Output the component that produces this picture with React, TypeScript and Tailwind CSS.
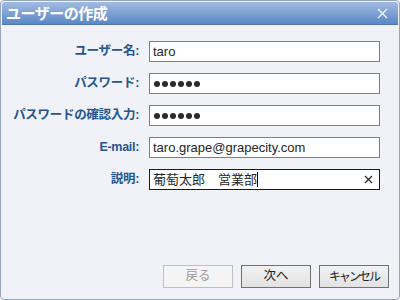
import React from "react";

const fontStack = {
  fontFamily: '"Liberation Sans", "Noto Sans CJK JP", sans-serif',
};

// Form row definition
type Field = {
  label: string;
  value: string;
  password?: boolean;
  focused?: boolean;
};

const fields: Field[] = [
  { label: "ユーザー名:", value: "taro" },
  { label: "パスワード:", value: "", password: true },
  { label: "パスワードの確認入力:", value: "", password: true },
  { label: "E-mail:", value: "taro.grape@grapecity.com" },
  { label: "説明:", value: "葡萄太郎　営業部", focused: true },
];

const Dots = () => (
  <div className="flex gap-[2px] pl-[1px]">
    {[0, 1, 2, 3, 4, 5].map((i) => (
      <span key={i} className="w-[6px] h-[6px] rounded-full bg-[#2a2a2a]" />
    ))}
  </div>
);

const App: React.FC = () => {
  return (
    <div
      className="w-[400px] h-[300px] bg-[#f0f2f7] border border-[#96a6be] rounded-[4px] flex flex-col overflow-hidden"
      style={fontStack}
    >
      {/* title bar */}
      <div className="mx-px mt-px h-[23px] rounded-t-[3px] bg-gradient-to-b from-[#a3bbe0] to-[#5b86c7] border-b border-[#4f78b5] flex items-center justify-between pl-[4px] pr-[10px]">
        <span className="text-white font-bold text-[15px] leading-none tracking-[-0.5px]">
          ユーザーの作成
        </span>
        <svg width="11" height="11" viewBox="0 0 11 11" className="text-[#eef3fb]">
          <path d="M1 1 L10 10 M10 1 L1 10" stroke="currentColor" strokeWidth="1.4" />
        </svg>
      </div>

      {/* form */}
      <div className="flex-1 flex flex-col gap-[11px] pt-[16px]">
        {fields.map((f) => (
          <div key={f.label} className="flex items-center h-[21px]">
            <div className="w-[138px] text-right text-[12.5px] font-bold text-[#24558c] tracking-[-0.3px]">
              {f.label}
            </div>
            <div
              className={
                "ml-[10px] w-[231px] h-[21px] bg-white flex items-center pl-[3px] pr-[6px] " +
                (f.focused ? "border border-[#1a1a1a]" : "border border-[#7f7f7f]")
              }
            >
              {f.password ? (
                <Dots />
              ) : (
                <span className="text-[13px] text-[#262626] leading-none">{f.value}</span>
              )}
              {f.focused && (
                <>
                  <span className="w-px h-[15px] bg-black" />
                  <span className="flex-1" />
                  <svg width="9" height="9" viewBox="0 0 9 9">
                    <path d="M1 1 L8 8 M8 1 L1 8" stroke="#333" strokeWidth="1.4" />
                  </svg>
                </>
              )}
            </div>
          </div>
        ))}
      </div>

      {/* buttons */}
      <div className="flex justify-end gap-[8px] pr-[10px] pb-[11px]">
        <button className="w-[70px] h-[23px] border border-[#bfbfbf] bg-[#f4f4f4] text-[12.5px] text-[#9a9a9a]">
          戻る
        </button>
        <button className="w-[70px] h-[23px] border border-[#707070] bg-gradient-to-b from-[#f2f2f2] to-[#e2e2e2] text-[12.5px] text-[#222]">
          次へ
        </button>
        <button className="w-[70px] h-[23px] border border-[#707070] bg-gradient-to-b from-[#f2f2f2] to-[#e2e2e2] text-[12px] tracking-[-2px] text-[#222]">
          キャンセル
        </button>
      </div>
    </div>
  );
};

export default App;
